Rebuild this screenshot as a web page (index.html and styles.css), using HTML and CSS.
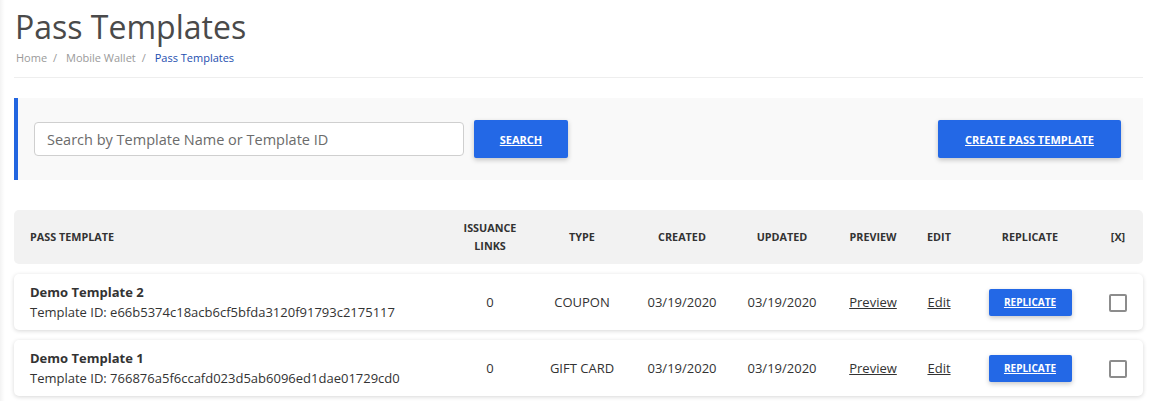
FILE: index.html
```html
<!DOCTYPE html>
<html lang="en">
<head>
<meta charset="utf-8">
<title>Pass Templates</title>
<link rel="stylesheet" href="styles.css">
</head>
<body>
<div class="page">
  <header class="page-head">
    <h1 class="title">Pass Templates</h1>
    <nav class="crumbs">
      <span class="crumb">Home</span><span class="sep">/</span>
      <span class="crumb">Mobile Wallet</span><span class="sep">/</span>
      <span class="crumb active">Pass Templates</span>
    </nav>
  </header>

  <section class="search-panel">
    <div class="search-left">
      <input class="search-input" type="text" placeholder="Search by Template Name or Template ID">
      <a class="btn btn-search" href="#">SEARCH</a>
    </div>
    <a class="btn btn-create" href="#">CREATE PASS TEMPLATE</a>
  </section>

  <section class="table">
    <div class="grid thead">
      <div class="c-name">PASS TEMPLATE</div>
      <div class="c">ISSUANCE<br>LINKS</div>
      <div class="c">TYPE</div>
      <div class="c">CREATED</div>
      <div class="c">UPDATED</div>
      <div class="c">PREVIEW</div>
      <div class="c">EDIT</div>
      <div class="c">REPLICATE</div>
      <div class="c">[X]</div>
    </div>

    <div class="grid trow">
      <div class="c-name">
        <div class="tname">Demo Template 2</div>
        <div class="tid">Template ID: e66b5374c18acb6cf5bfda3120f91793c2175117</div>
      </div>
      <div class="c">0</div>
      <div class="c">COUPON</div>
      <div class="c">03/19/2020</div>
      <div class="c">03/19/2020</div>
      <div class="c"><a class="link" href="#">Preview</a></div>
      <div class="c"><a class="link" href="#">Edit</a></div>
      <div class="c"><a class="btn btn-rep" href="#">REPLICATE</a></div>
      <div class="c"><span class="check"></span></div>
    </div>

    <div class="grid trow">
      <div class="c-name">
        <div class="tname">Demo Template 1</div>
        <div class="tid">Template ID: 766876a5f6ccafd023d5ab6096ed1dae01729cd0</div>
      </div>
      <div class="c">0</div>
      <div class="c">GIFT CARD</div>
      <div class="c">03/19/2020</div>
      <div class="c">03/19/2020</div>
      <div class="c"><a class="link" href="#">Preview</a></div>
      <div class="c"><a class="link" href="#">Edit</a></div>
      <div class="c"><a class="btn btn-rep" href="#">REPLICATE</a></div>
      <div class="c"><span class="check"></span></div>
    </div>
  </section>
</div>
</body>
</html>
```

FILE: styles.css
```css
* { box-sizing: border-box; }
html, body { margin: 0; padding: 0; background: #fff; }
body {
  font-family: "Open Sans", "Liberation Sans", sans-serif;
  color: #333;
  height: 401px;
  overflow: hidden;
  background: linear-gradient(to right, #f3f3f3 0, #fbfbfb 3px, #fff 5px);
}
.page {
  padding: 0 6px 0 14px;
}
.page-head {
  padding: 5px 0 12px 1px;
  border-bottom: 1px solid #eeeeee;
}
.title {
  margin: 0;
  font-size: 32px;
  font-weight: 400;
  line-height: 44px;
  color: #4a4a4a;
}
.crumbs {
  font-size: 11px;
  line-height: 15px;
  color: #9a9a9a;
  margin-top: 1px;
  padding-left: 1px;
}
.sep { margin: 0 6px; }
.crumb.active { color: #1d4eaf; }

.search-panel {
  margin-top: 20px;
  height: 82px;
  background: #f9f9f9;
  border-left: 4px solid #2366e0;
  display: flex;
  align-items: center;
  justify-content: space-between;
  padding: 0 22px 0 16px;
}
.search-left {
  display: flex;
  align-items: center;
  gap: 10px;
}
.search-input {
  width: 430px;
  height: 34px;
  border: 1px solid #cfcfcf;
  border-radius: 4px;
  background: #fff;
  padding: 0 12px;
  font-family: "Open Sans", "Liberation Sans", sans-serif;
  font-size: 14.5px;
  color: #333;
  outline: none;
}
.search-input::placeholder { color: #6b6b6b; }

.btn {
  display: inline-flex;
  align-items: center;
  justify-content: center;
  background: #2368e6;
  color: #fff;
  font-weight: 700;
  text-decoration: underline;
  border-radius: 2px;
  box-shadow: 0 2px 5px rgba(0,0,0,0.22);
}
.btn-search {
  width: 94px;
  height: 38px;
  font-size: 11px;
}
.btn-create {
  width: 183px;
  height: 38px;
  font-size: 11px;
}

.table { margin-top: 30px; }
.grid {
  display: grid;
  grid-template-columns: 414px 92px 92px 108px 92px 90px 42px 140px 36px;
  align-items: center;
  padding-left: 16px;
}
.c { text-align: center; }
.thead {
  height: 54px;
  background: #f2f2f2;
  border-radius: 5px;
  font-size: 10.8px;
  font-weight: 700;
  line-height: 18px;
  color: #333;
}
.trow {
  height: 56px;
  margin-top: 10px;
  background: #fff;
  border-radius: 5px;
  box-shadow: 0 1px 4px rgba(0,0,0,0.16);
  font-size: 13px;
  color: #333;
}
.tname { font-weight: 700; line-height: 20px; }
.tid { line-height: 20px; }
.link { color: #333; text-decoration: underline; }
.btn-rep {
  width: 83px;
  height: 27px;
  font-size: 10px;
}
.check {
  display: inline-block;
  width: 18px;
  height: 18px;
  border: 2px solid #8c8c8c;
  border-radius: 2px;
  vertical-align: middle;
}
```
